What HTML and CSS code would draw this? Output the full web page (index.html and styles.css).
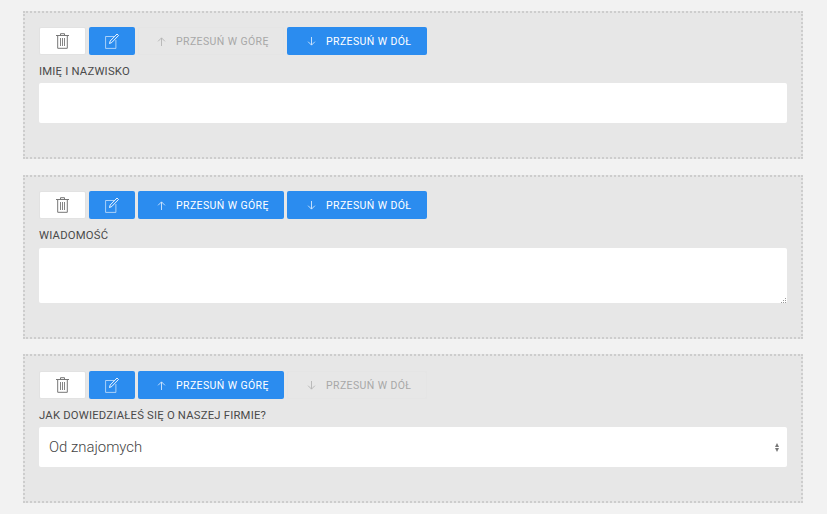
FILE: index.html
```html
<!DOCTYPE html>
<html lang="pl">
<head>
<meta charset="UTF-8">
<title>Formularz</title>
<link rel="stylesheet" href="styles.css">
</head>
<body>

<svg class="sprite" width="0" height="0">
    <symbol id="i-trash" viewBox="0 0 13 16">
        <path d="M0 2.500h13M4.500 2.500V.7h4v1.800M1.700 2.500V15.300h9.600V2.500" fill="none" stroke="currentColor"/>
        <path d="M4.500 5v8M6.500 5v8M8.500 5v8" fill="none" stroke="currentColor" stroke-width=".9"/>
    </symbol>
    <symbol id="i-edit" viewBox="0 0 14 16">
        <path d="M9 3.500H.6v11.900h10.300V7" fill="none" stroke="currentColor" opacity=".6"/>
        <path d="M4.500 10.500l.7-2.500L12 1l1.500 1.500-6.700 7z" fill="none" stroke="currentColor" stroke-width=".9"/>
    </symbol>
    <symbol id="i-up" viewBox="0 0 10 10">
        <path d="M5 10V1M1.200 4.800L5 1l3.800 3.800" fill="none" stroke="currentColor"/>
    </symbol>
    <symbol id="i-down" viewBox="0 0 10 10">
        <path d="M5 0v9M1.200 5.200L5 9l3.800-3.800" fill="none" stroke="currentColor"/>
    </symbol>
</svg>

<!-- pole 1 -->
<div class="field">
    <div class="toolbar">
        <button class="btn btn-white"><svg class="ico-trash"><use href="#i-trash"/></svg></button>
        <button class="btn btn-blue"><svg class="ico-edit"><use href="#i-edit"/></svg></button>
        <button class="btn btn-move btn-off"><svg class="ico-arrow"><use href="#i-up"/></svg>Przesuń w górę</button>
        <button class="btn btn-move btn-blue btn-down"><svg class="ico-arrow"><use href="#i-down"/></svg>Przesuń w dół</button>
    </div>
    <label class="field-label">Imię i nazwisko</label>
    <input class="control" type="text">
</div>

<!-- pole 2 -->
<div class="field field-area">
    <div class="toolbar">
        <button class="btn btn-white"><svg class="ico-trash"><use href="#i-trash"/></svg></button>
        <button class="btn btn-blue"><svg class="ico-edit"><use href="#i-edit"/></svg></button>
        <button class="btn btn-move btn-blue"><svg class="ico-arrow"><use href="#i-up"/></svg>Przesuń w górę</button>
        <button class="btn btn-move btn-blue btn-down"><svg class="ico-arrow"><use href="#i-down"/></svg>Przesuń w dół</button>
    </div>
    <label class="field-label">Wiadomość</label>
    <div class="area-wrap">
        <textarea class="control control-area"></textarea>
        <svg class="grip" width="6" height="6" viewBox="0 0 6 6"><path d="M5 1h1v1H5zM3 3h1v1H3zM5 3h1v1H5zM1 5h1v1H1zM3 5h1v1H3zM5 5h1v1H5z" fill="#999"/></svg>
    </div>
</div>

<!-- pole 3 -->
<div class="field field-last">
    <div class="toolbar">
        <button class="btn btn-white"><svg class="ico-trash"><use href="#i-trash"/></svg></button>
        <button class="btn btn-blue"><svg class="ico-edit"><use href="#i-edit"/></svg></button>
        <button class="btn btn-move btn-blue"><svg class="ico-arrow"><use href="#i-up"/></svg>Przesuń w górę</button>
        <button class="btn btn-move btn-off btn-down"><svg class="ico-arrow"><use href="#i-down"/></svg>Przesuń w dół</button>
    </div>
    <label class="field-label">Jak dowiedziałeś się o naszej firmie?</label>
    <div class="control control-select">
        <span>Od znajomych</span>
        <span class="carets"></span>
    </div>
</div>

</body>
</html>
```

FILE: styles.css
```css
body {
    margin: 0;
    padding: 11px 24px 0 23px;
    height: 514px;
    box-sizing: border-box;
    overflow: hidden;
    background: #f2f2f2;
    font-family: Roboto, sans-serif;
    color: #4a4a4a;
}

.sprite {
    display: block;
}

.field {
    height: 148px;
    margin-bottom: 16px;
    padding: 14px 14px 0;
    box-sizing: border-box;
    background: #e7e7e7;
    border: 2px dotted #cdcdcd;
}

.field-area {
    height: 164px;
    margin-bottom: 15px;
}

.field-last {
    height: 149px;
    padding-top: 15px;
}

.toolbar {
    display: flex;
    gap: 3px;
    height: 28px;
}

.btn {
    display: flex;
    align-items: center;
    justify-content: center;
    width: 46px;
    height: 28px;
    padding: 0;
    border: 1px solid transparent;
    border-radius: 2px;
    box-sizing: border-box;
    font-family: Roboto, sans-serif;
    font-size: 10.5px;
    letter-spacing: 0.4px;
    text-transform: uppercase;
}

.btn-white {
    width: 47px;
    background: #fff;
    border-color: #e2e2e2;
    color: #777;
}

.btn-blue {
    background: #2b8cef;
    color: #fff;
}

.btn-off {
    background: #e7e7e7;
    border-color: #e5e5e5;
    color: #a8a8a8;
}

.btn-move {
    justify-content: flex-start;
    width: 146px;
    padding-left: 18px;
}

.btn-down {
    width: 140px;
    padding-left: 19px;
}

.ico-trash {
    width: 13px;
    height: 16px;
}

.ico-edit {
    width: 14px;
    height: 16px;
}

.ico-arrow {
    width: 9px;
    height: 9px;
    margin-right: 10px;
    opacity: 0.8;
}

.field-label {
    display: block;
    margin: 10px 0 5px;
    font-size: 11.3px;
    line-height: 13px;
    letter-spacing: 0.2px;
    text-transform: uppercase;
}

.field-area .field-label {
    margin-bottom: 6px;
}

.control {
    display: block;
    width: 100%;
    height: 40px;
    margin: 0;
    padding: 0 10px;
    box-sizing: border-box;
    background: #fff;
    border: 0;
    border-radius: 2px;
    font-family: Roboto, sans-serif;
    font-size: 14.9px;
    font-weight: 300;
    color: #444;
}

.area-wrap {
    position: relative;
}

.control-area {
    height: 55px;
    resize: none;
}

.grip {
    position: absolute;
    right: 1px;
    bottom: 0;
}

.control-select {
    display: flex;
    align-items: center;
    justify-content: space-between;
    padding-right: 8px;
}

.carets {
    display: flex;
    flex-direction: column;
    gap: 1px;
}

.carets::before,
.carets::after {
    content: "";
    border-left: 2.5px solid transparent;
    border-right: 2.5px solid transparent;
}

.carets::before {
    border-bottom: 4px solid #777;
}

.carets::after {
    border-top: 4px solid #777;
}
```
